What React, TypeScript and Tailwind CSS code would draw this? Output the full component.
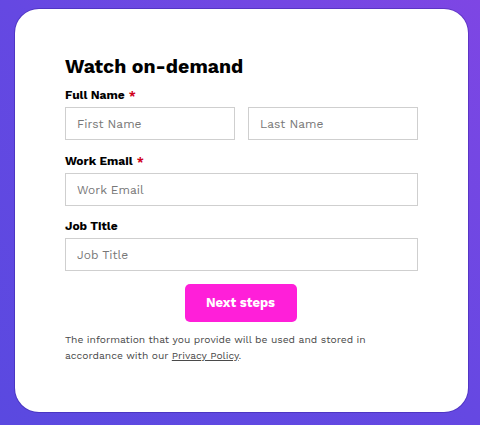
import React from "react";

const font = { fontFamily: '"Work Sans", Inter, "Noto Sans", sans-serif' };

function Label({ text, required }: { text: string; required?: boolean }) {
  return (
    <div className="text-[12px] leading-[16px] font-bold text-black mb-[4px]">
      {text}
      {required && <span className="text-[#d0021b] ml-[4px]">*</span>}
    </div>
  );
}

function Field({ placeholder }: { placeholder: string }) {
  return (
    <input
      placeholder={placeholder}
      className="w-full h-[33px] border border-[#cfcfcf] bg-white px-[11px] text-[12px] text-[#333] placeholder:text-[#777] outline-none"
      style={font}
    />
  );
}

export default function App() {
  return (
    <div
      className="w-[480px] h-[425px] overflow-hidden bg-gradient-to-tr from-[#5a49e0] via-[#6548e2] to-[#7e46e4] pt-[9px] pl-[15px]"
      style={font}
    >
      <div className="w-[453px] h-[403px] bg-white rounded-[24px] shadow-[0_0_0_1px_rgba(40,20,140,0.35)] pt-[46px] pl-[50px] pr-[50px]">
        <h2 className="text-[19.5px] leading-[24px] font-bold text-black mb-[8px]">
          Watch on-demand
        </h2>
        <Label text="Full Name" required />
        <div className="flex gap-[13px] w-[353px]">
          <Field placeholder="First Name" />
          <Field placeholder="Last Name" />
        </div>
        <div className="mt-[13px] w-[353px]">
          <Label text="Work Email" required />
          <Field placeholder="Work Email" />
        </div>
        <div className="mt-[12px] w-[353px]">
          <Label text="Job Title" />
          <Field placeholder="Job Title" />
        </div>
        <div className="w-[353px] flex justify-center mt-[13px] pr-[2px]">
          <button className="w-[112px] h-[38px] rounded-[5px] bg-[#ff1fd9] text-white text-[13px] font-bold" style={font}>
            Next steps
          </button>
        </div>
        <p className="mt-[10px] text-[10.3px] leading-[16px] text-[#4a4a4a] w-[353px]">
          The information that you provide will be used and stored in
          <br />
          accordance with our <span className="underline">Privacy Policy</span>.
        </p>
      </div>
    </div>
  );
}
